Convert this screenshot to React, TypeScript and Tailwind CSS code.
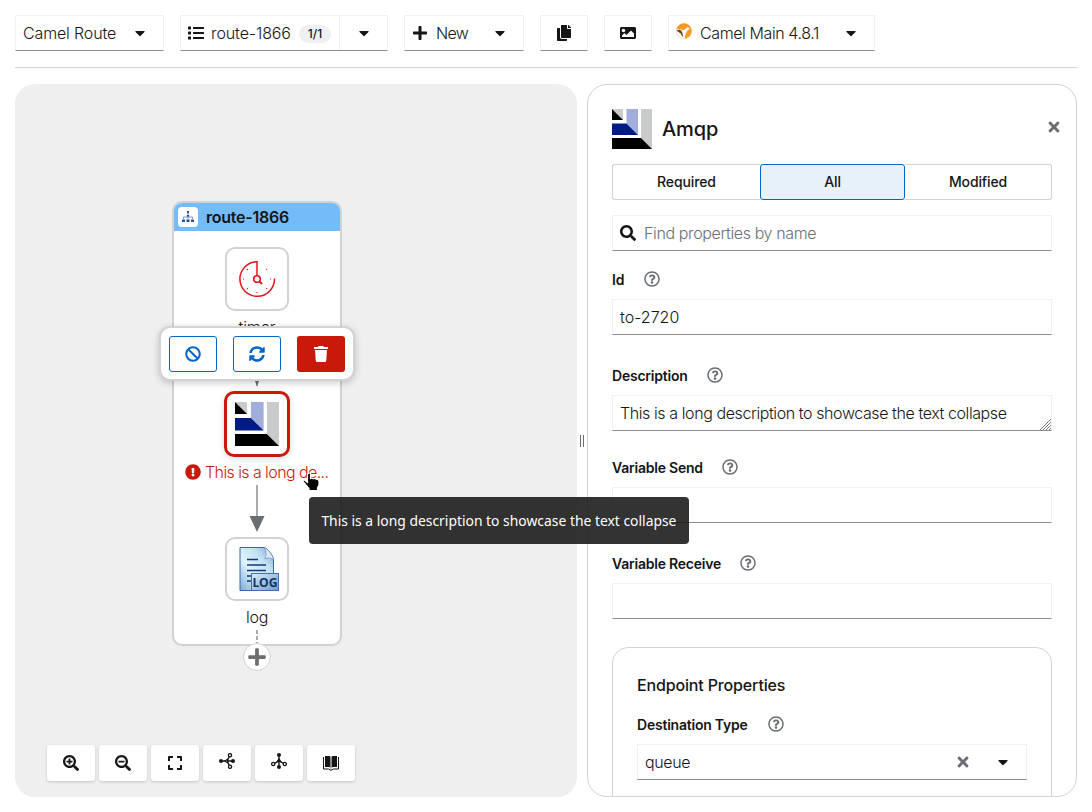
import React from "react";
import type { ReactNode } from "react";
import {
  FaBan, FaCaretDown, FaCopy, FaExclamationCircle, FaExpand, FaImage, FaList, FaPlus,
  FaRegQuestionCircle, FaSearch, FaSearchMinus, FaSearchPlus, FaSyncAlt, FaTimes,
} from "react-icons/fa";

const control = "flex h-9 shrink-0 items-center border border-[#f0f0f0] border-b-[#8a8d90] bg-white";

function AmqpLogo({ size }: { size: number }) {
  return (
    <svg width={size} height={size} viewBox="0 0 40 40" className="shrink-0">
      <path d="M0 0H11V11Z" fill="#c9cacc" />
      <path d="M0 0L11 11H0Z" fill="#000" />
      <path d="M14.500 0H26V26L14.500 14.500Z" fill="#a1aedb" />
      <path d="M0 14.500H14.500L26 26H0Z" fill="#001b85" />
      <path d="M29 0H40V40L29 29Z" fill="#c9cacc" />
      <path d="M0 29H29L40 40H0Z" fill="#000" />
    </svg>
  );
}

function CamelLogo() {
  return (
    <svg width="16" height="16" viewBox="0 0 16 16" className="mb-1 shrink-0">
      <circle cx="8" cy="8" r="7.800" fill="#f79a23" />
      <path d="M.2 7Q2.200 5.500 4 6Q6 7.600 8 7L11.500 4.200L13.300 4.800L13.500 6.200L11.700 7L9.800 10.500L8.500 15.700Q1 16 .2 7Z" fill="#fff" />
      <path d="M.5 7.500L3.600 6.500Q5.600 7.500 6.300 9.500L7.300 14.500Q5.300 12.500 4.500 10.200L2.500 9.200Z" fill="#6b4418" />
      <path d="M.3 9.500Q1.500 14.500 6.500 15.600" fill="none" stroke="#ddd" strokeWidth=".5" />
    </svg>
  );
}

function TimerIcon() {
  return (
    <svg width="38" height="38" viewBox="0 0 38 38" fill="none" stroke="#e8121a" strokeWidth="1.500">
      <path d="M36.500 18.500A17.300 17.300 0 1 1 19 1.700V15.500" />
      <circle cx="19" cy="19" r="3.300" strokeWidth="1.600" />
      <path d="M21.200 21.300L24 24" strokeWidth="2" />
      <path d="M5 19h1M32 19h1M19 32v1M9 9l.8.8M28.300 9.700l.8-.8M9 29l.8-.8M28.300 28.300l.8.800" strokeWidth="1.200" />
    </svg>
  );
}

function LogIcon() {
  return (
    <svg width="40" height="46" viewBox="0 0 40 46" className="ml-[3px]">
      <defs>
        <linearGradient id="paper" x1="0" y1="1" x2="1" y2="0">
          <stop offset="0" stopColor="#7ca9d8" />
          <stop offset=".4" stopColor="#e0f5fc" />
          <stop offset=".7" stopColor="#c1e1f2" />
          <stop offset="1" stopColor="#7b9dd2" />
        </linearGradient>
        <linearGradient id="tag" x1="0" y1="0" x2="1" y2="1">
          <stop offset="0" stopColor="#dceefb" />
          <stop offset="1" stopColor="#6d99d0" />
        </linearGradient>
      </defs>
      <path d="M1 1.500H25C29 3 34 9 34.500 14V44.500H1Z" fill="url(#paper)" stroke="#3b63ae" />
      <path d="M25 1.500C28 5 27 10 26 13C29 11 32 12 34.500 14C34 9 29 3 25 1.500Z" fill="#dceaf8" stroke="#5f82be" strokeWidth=".6" />
      <path d="M8 13.500H19M8 19H27M8 24.500H27M8 30H13M8 35H13" stroke="#14386f" strokeWidth="1.600" />
      <rect x="12.500" y="27.500" width="27" height="17" fill="url(#tag)" stroke="#426db1" />
      <text x="26" y="40.500" textAnchor="middle" textLength="25" lengthAdjust="spacingAndGlyphs" fontFamily="Noto Sans, sans-serif" fontSize="13" fontWeight="700" fill="#11346a">LOG</text>
    </svg>
  );
}

function TrashIcon() {
  return (
    <svg width="14" height="16" viewBox="0 0 14 16" fill="currentColor">
      <path d="M0 1H4L4.700 0H9.300L10 1H14V3H0ZM1 4H13L12.200 14.800Q12.100 16 11 16H3Q1.900 16 1.800 14.800Z" />
    </svg>
  );
}

function RouteIcon() {
  return (
    <svg width="14" height="14" viewBox="0 0 14 14" fill="#29509d">
      <path d="M7 3V10M2.500 9V7H11.500V9" fill="none" stroke="#6682bb" strokeWidth=".8" />
      <rect x="6" y="1" width="2" height="2.200" />
      <rect x="5.800" y="5" width="2.400" height="1.600" />
      <rect x="1" y="9.500" width="3" height="2.500" />
      <rect x="5.500" y="9.500" width="3" height="2.500" />
      <rect x="10" y="9.500" width="3" height="2.500" />
    </svg>
  );
}

function LayoutIcon({ vertical = false }: { vertical?: boolean }) {
  return (
    <svg width="16" height="16" viewBox="0 0 16 16" className={vertical ? "mb-1 rotate-90" : "mb-1"} fill="none" stroke="#151515" strokeWidth="1.300">
      <path d="M3 8H6M8 8H13M8.500 6.800L10.500 3.500M8.500 9.200L10.500 12.500" />
      <circle cx="2" cy="8" r="2" fill="#151515" stroke="none" />
      <circle cx="14" cy="8" r="2" fill="#151515" stroke="none" />
      <path d="M6 8L8.700 6.200V9.800Z" fill="white" />
      <circle cx="11" cy="2.200" r="1.600" fill="white" />
      <circle cx="11" cy="13.800" r="1.600" fill="white" />
    </svg>
  );
}

function CatalogIcon() {
  return (
    <svg width="16" height="16" viewBox="0 0 16 16">
      <path d="M2 1H6.500L7.500 1.800V12.800L6.500 12H2ZM14 1H9.500L8.500 1.800V12.800L9.500 12H14Z" fill="#151515" />
      <path d="M.5 2V14H5.500L7 15H9L10.500 14H15.500V2" fill="none" stroke="#151515" strokeWidth="1" />
      <path d="M8 2V14" stroke="#8a8d90" strokeWidth="1" />
    </svg>
  );
}

function Field({ label, labelWidth, children, className = "" }: { label: string; labelWidth: string; children?: ReactNode; className?: string }) {
  return (
    <div className={className}>
      <div className="flex h-5 items-center text-sm font-[570] tracking-[-0.22px] text-[#151515]">
        <span className={`whitespace-nowrap ${labelWidth}`}>{label}</span>
        <FaRegQuestionCircle className="mb-0.5 ml-5 text-base text-[#6a6e73]" />
      </div>
      <div className={`${control} relative mt-[9px] px-[7px] text-base text-[#151515]`}>{children}</div>
    </div>
  );
}

function Toolbar() {
  return (
    <header className="mx-[15px] flex h-[68px] shrink-0 items-start gap-4 border-b border-[#d2d2d2] pt-[15px] text-base">
      <button className={`${control} w-[149px] px-[7px]`}>
        <span className="w-[93px] whitespace-nowrap text-left tracking-[-0.15px]">Camel Route</span><FaCaretDown className="ml-4" />
      </button>
      <div className={`${control} w-[208px]`}>
        <button className="flex h-full w-[159px] items-center border-r border-[#f0f0f0] pl-[7px]">
          <FaList />
          <span className="ml-[7px] w-20 whitespace-nowrap text-left tracking-[-0.1px]">route-1866</span>
          <span className="ml-2 mt-0.5 flex h-[18px] w-8 items-center justify-center rounded-full bg-[#f0f0f0] text-xs font-medium">1/1</span>
        </button>
        <button className="flex flex-1 justify-center"><FaCaretDown /></button>
      </div>
      <button className={`${control} w-[120px] pl-[7px]`}>
        <FaPlus /><span className="ml-2 w-8 whitespace-nowrap text-left tracking-[-0.7px]">New</span><FaCaretDown className="ml-6" />
      </button>
      <button className={`${control} w-12 justify-center`}><FaCopy /></button>
      <button className={`${control} w-12 justify-center`}><FaImage /></button>
      <button className={`${control} w-[207px] pl-[7px]`}>
        <CamelLogo /><span className="ml-2 w-[119px] whitespace-nowrap text-left tracking-[-0.4px]">Camel Main 4.8.1</span><FaCaretDown className="ml-6" />
      </button>
    </header>
  );
}

function Canvas() {
  const nodeBox = "absolute flex h-16 w-16 items-center justify-center rounded-[10px] border-2 border-[#d2d2d2] bg-white";
  const action = "flex h-9 w-12 items-center justify-center rounded-[3px] border border-[#06c] text-base text-[#06c]";
  const zoomButton = "flex h-9 w-12 items-center justify-center rounded-[3px] bg-white shadow-[0_1px_3px_rgba(0,0,0,0.18)]";
  return (
    <main className="relative w-[562px] shrink-0 rounded-[20px] bg-[#efefef]">
      <section className="absolute left-[157px] top-[117px] h-[445px] w-[170px] rounded-[10px] border-2 border-[#d2d2d2] bg-white">
        <div className="flex h-7 items-center rounded-t-[8px] bg-[#73bcf7] pl-1">
          <span className="flex h-5 w-5 items-center justify-center rounded-[4px] bg-white"><RouteIcon /></span>
          <span className="ml-2 whitespace-nowrap text-base font-semibold tracking-[-0.25px]">route-1866</span>
        </div>
      </section>
      <div className={`${nodeBox} left-[210px] top-[163px]`}><TimerIcon /></div>
      <span className="absolute left-[202px] top-[231px] w-20 text-center tracking-[-0.1px]">timer</span>
      <svg className="absolute left-[232px] top-[290px]" width="20" height="310" viewBox="0 0 20 310">
        <path d="M10 0V12M10 111V145M10 256V276" stroke="#aaabac" strokeWidth="2" />
        <path d="M2.500 142H17.500L10 158ZM5 0H15L10 12Z" fill="#6a6e73" />
        <path d="M10 256V272" stroke="white" strokeWidth="2" strokeDasharray="2 4" strokeDashoffset="-4" />
      </svg>
      <div className="absolute left-[209px] top-[307px] flex h-[66px] w-[66px] items-center justify-center rounded-[10px] border-3 border-[#c9190b] bg-white shadow-[0_2px_7px_rgba(0,0,0,0.14)]"><AmqpLogo size={44} /></div>
      <div className="absolute left-[170px] top-[376px] flex h-6 items-center text-[#c9190b]">
        <FaExclamationCircle /><span className="ml-1 whitespace-nowrap tracking-[-0.58px]">This is a long de...</span>
      </div>
      <div className={`${nodeBox} left-[210px] top-[453px]`}><LogIcon /></div>
      <span className="absolute left-[202px] top-[521px] w-20 text-center tracking-[-0.3px]">log</span>
      <button className="absolute left-[228px] top-[559px] flex h-7 w-7 items-center justify-center rounded-full border border-[#d2d2d2] bg-white text-[20px] text-[#6a6e73]"><FaPlus /></button>
      <div className="absolute left-[144px] top-[242px] flex h-[55px] w-[196px] items-center justify-center gap-4 rounded-[11px] border-2 border-[#d2d2d2] bg-white shadow-[0_2px_7px_rgba(0,0,0,0.2)]">
        <button className={action}><FaBan /></button><button className={action}><FaSyncAlt /></button>
        <button className="flex h-9 w-12 items-center justify-center rounded-[3px] bg-[#c9190b] text-base text-white"><TrashIcon /></button>
      </div>
      <div className="absolute bottom-4 left-8 flex gap-1">
        <button className={zoomButton}><FaSearchPlus /></button>
        <button className={zoomButton}><FaSearchMinus /></button>
        <button className={zoomButton}><FaExpand /></button>
        <button className={zoomButton}><LayoutIcon /></button>
        <button className={zoomButton}><LayoutIcon vertical /></button>
        <button className={zoomButton}><CatalogIcon /></button>
      </div>
    </main>
  );
}

function PropertiesPanel() {
  return (
    <aside className="w-[490px] shrink-0 overflow-hidden rounded-[20px] border border-[#d2d2d2] bg-white px-6 pt-6 text-base">
      <header className="flex h-10 items-center">
        <AmqpLogo size={40} />
        <h1 className="ml-2.5 text-xl font-[450] tracking-[-0.1px]">Amqp</h1>
        <FaTimes className="-mr-2.5 mb-1 ml-auto text-[#6a6e73]" />
      </header>
      <div className="mt-[15px] flex h-9 text-sm font-[550] tracking-[-0.12px]">
        <button className="w-[148px] rounded-l-[3px] border border-r-0 border-[#d2d2d2]">Required</button>
        <button className="w-[145px] rounded-[3px] border border-[#06c] bg-[#e7f1fa]">All</button>
        <button className="flex-1 rounded-r-[3px] border border-l-0 border-[#d2d2d2]">Modified</button>
      </div>
      <div className={`${control} mt-[15px] px-[7px] text-[#6a6e73]`}>
        <FaSearch className="text-[#151515]" /><span className="ml-2 tracking-[-0.38px]">Find properties by name</span>
      </div>
      <Field label="Id" labelWidth="w-3" className="mt-[19px]">
        <span>to-2720</span>
      </Field>
      <Field label="Description" labelWidth="w-[75px]" className="mt-[31px]">
        <span className="whitespace-nowrap tracking-[-0.41px]">This is a long description to showcase the text collapse</span>
        <svg className="absolute bottom-0 right-0" width="11" height="11"><path d="M0 11L11 0M3 11L11 3M6 11L11 6M9 11L11 9" stroke="#777" /></svg>
      </Field>
      <Field label="Variable Send" labelWidth="w-[90px]" className="mt-[27px]" />
      <Field label="Variable Receive" labelWidth="w-[108px]" className="mt-[31px]" />
      <section className="mt-7 h-[190px] rounded-t-[16px] border border-[#d2d2d2] px-6 pt-[25px]">
        <h2 className="h-6 text-base font-[450] tracking-[-0.15px]">Endpoint Properties</h2>
        <Field label="Destination Type" labelWidth="w-[111px]" className="mt-[18px]">
          <span className="flex-1 tracking-[-0.4px]">queue</span><FaTimes className="mr-6 text-[#6a6e73]" /><FaCaretDown className="mr-2" />
        </Field>
      </section>
    </aside>
  );
}

export default function App() {
  return (
    <div className="relative flex h-[812px] w-[1092px] flex-col overflow-hidden bg-white font-['Inter',sans-serif] text-base font-[350] text-[#151515]">
      <Toolbar />
      <div className="mx-[15px] mt-4 flex h-[713px]">
        <Canvas />
        <div className="flex w-2.5 shrink-0 items-center justify-center gap-0.5"><i className="h-3 w-px bg-[#6a6e73]" /><i className="h-3 w-px bg-[#6a6e73]" /></div>
        <PropertiesPanel />
      </div>
      <div className="absolute left-[309px] top-[497px] flex h-[47px] w-[380px] items-center justify-center rounded-[4px] bg-[#151515]/87 font-['Noto_Sans',sans-serif] text-[15px] font-normal text-white">
        <span className="origin-center scale-x-[0.925] whitespace-nowrap">This is a long description to showcase the text collapse</span>
      </div>
      <svg className="absolute left-[301px] top-[472px]" width="20" height="20" viewBox="0 0 20 20">
        <path d="M7 1.500Q8.300 .5 9.500 1.500V6.500Q11 5.500 12.300 6.700Q13.800 6 15 7.200Q17.300 7 18 9V13L16.500 16V18.500H8V16.500L4.500 12.500L2 9.500Q1.800 7.800 3.500 8L6.500 10.500V2.500Z" fill="#050505" stroke="white" strokeWidth="1.200" />
      </svg>
    </div>
  );
}
